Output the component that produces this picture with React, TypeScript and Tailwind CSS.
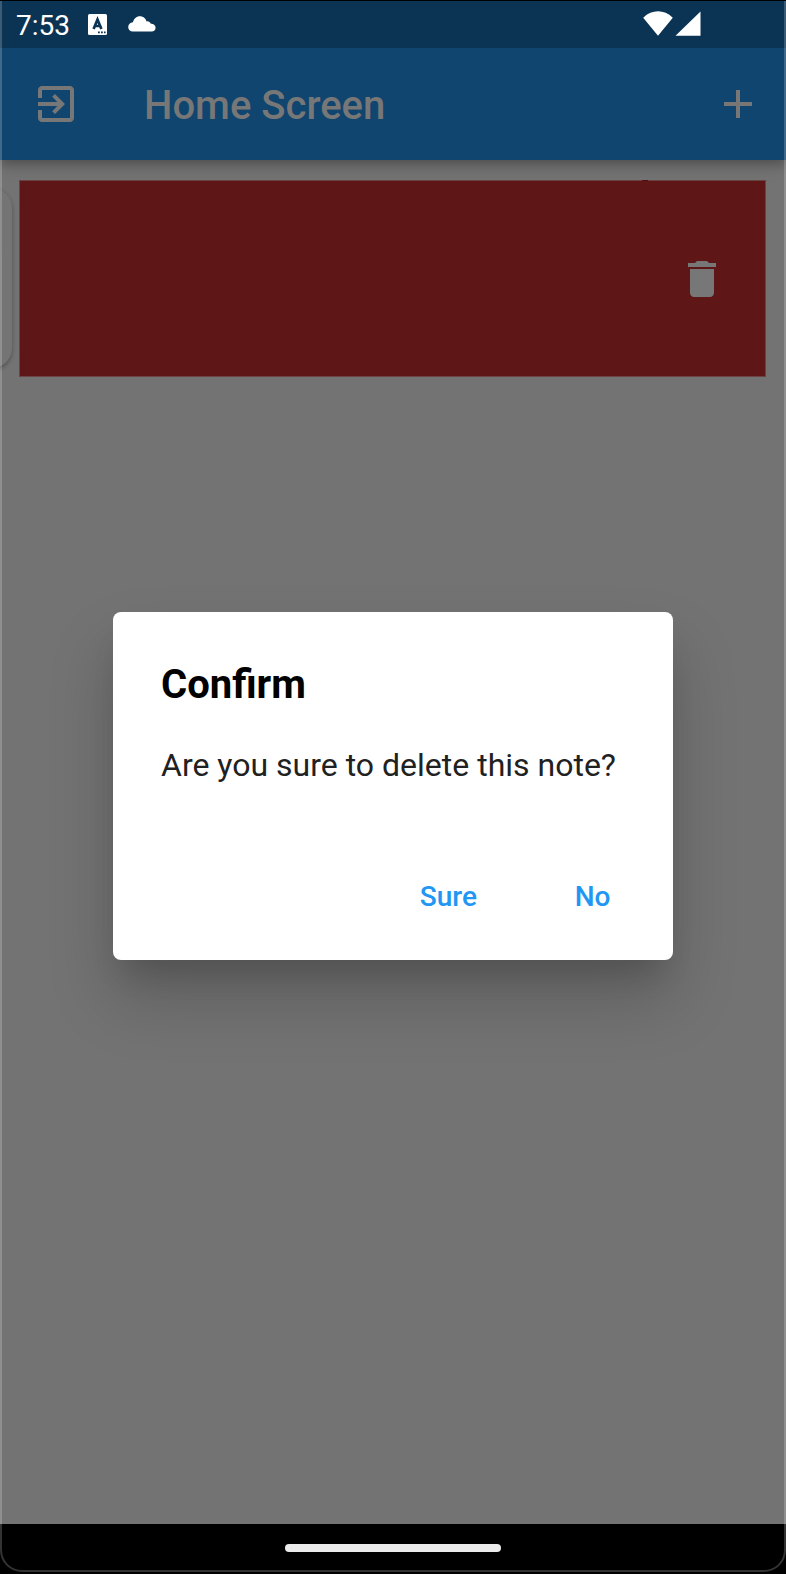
import React from 'react';

function StatusBar() {
  return (
    <div className="relative z-20 flex h-12 items-center border-t border-black bg-[#0b3454] pl-4 pr-[85.5px] text-white">
      <time className="w-[71.5px] pt-[2px] text-[28px] leading-[32px]">7:53</time>
      <svg className="mb-px h-[21px] w-[19px]" viewBox="0 0 19 21">
        <rect width="19" height="21" rx="1.5" fill="#fff" />
        <path d="M5.6 15 9.500 5.500l3.900 9.500M6.800 12h5.500" fill="none" stroke="#0b3454" strokeWidth="2.7" />
        <path d="M10 17.500h1.800v1.700H10zM13 17.500h1.800v1.700H13zM16 17.500h1.600v1.700H16z" fill="#0b3454" />
      </svg>
      <svg className="mb-[2px] ml-[21px] h-[16px] w-[28px]" viewBox="0 0 28 16">
        <path d="M5 15.500C2 15.500.2 13.400.2 11c0-2.600 2-4.600 4.700-4.800C6 2.600 8.300.2 11.800.2c3.400 0 6 2.200 6.700 5.200 1.200-.5 3.300 0 4.100 2.200 3 .2 5 2 5 4.200 0 2.200-1.600 3.700-4 3.700Z" fill="#fff" />
      </svg>
      <svg className="mb-[2px] ml-auto h-[25px] w-[58px]" viewBox="0 0 58 25">
        <path d="M.2 6.700C9 -1.800 21 -1.800 29.800 6.700L15 24.800ZM57.500.5V24.800H32.500Z" fill="#fff" />
      </svg>
    </div>
  );
}

function AppBar() {
  return (
    <header className="relative z-10 flex h-28 items-center bg-[#10456f] pl-[32px] pr-[24px] text-[#777] shadow-[0_4px_10px_rgba(0,0,0,0.25),0_8px_16px_rgba(0,0,0,0.08)]">
      <svg className="h-12 w-12" viewBox="0 0 24 24" fill="currentColor">
        <path d="M10.090 15.590 11.500 17l5-5-5-5-1.410 1.410L12.670 11H3v2h9.670l-2.580 2.590zM19 3H5c-1.110 0-2 .9-2 2v4h2V5h14v14H5v-4H3v4c0 1.100.89 2 2 2h14c1.100 0 2-.9 2-2V5c0-1.100-.9-2-2-2z" />
      </svg>
      <h1 className="ml-[64px] pt-[4px] text-[40px] font-medium leading-[46px]">Home Screen</h1>
      <svg className="ml-auto h-12 w-12" viewBox="0 0 24 24" fill="currentColor">
        <path d="M19 13h-6v6h-2v-6H5v-2h6V5h2v6h6v2z" />
      </svg>
    </header>
  );
}

function DismissibleNote() {
  return (
    <section className="flex pt-5">
      <div className="-ml-10 mt-[8px] h-[180px] w-[52px] rounded-[20px] bg-[#747474] shadow-[0_2px_4px_rgba(0,0,0,0.3)]" />
      <div className="relative ml-[7px] flex h-[197px] w-[747px] items-center justify-end border border-[#6c4444] bg-[#5f1616] pr-[39px]">
        <i className="absolute -top-px left-[622px] h-px w-[6px] bg-[#541010]" />
        <svg className="h-12 w-12 text-[#777]" viewBox="0 0 24 24" fill="currentColor">
          <path d="M6 19c0 1.100.9 2 2 2h8c1.100 0 2-.9 2-2V7H6v12zM19 4h-3.500l-1-1h-5l-1 1H5v2h14V4z" />
        </svg>
      </div>
    </section>
  );
}

function ConfirmDialog() {
  return (
    <div className="absolute inset-0 z-20 flex items-start justify-center pt-[611.500px]">
      <div role="dialog" className="h-[348.500px] w-[560px] rounded-[8px] bg-white px-12 pt-[50.500px] shadow-[0_22px_30px_-12px_rgba(0,0,0,0.16),0_38px_64px_2px_rgba(0,0,0,0.18)]">
        <h2 className="text-[40px] font-bold leading-[46px] text-black">Confirm</h2>
        <p className="mt-[33px] whitespace-nowrap text-[32px] leading-[48px] text-[#212121]">Are you sure to delete this note?</p>
        <div className="mt-[90px] flex justify-end pr-[14.5px] text-[28px] font-medium leading-[36px] text-[#2196f3]">
          <button className="w-[155px] text-left">Sure</button>
          <button>No</button>
        </div>
      </div>
    </div>
  );
}

export default function App() {
  return (
    <main className="relative flex h-[1574px] w-[786px] flex-col overflow-hidden bg-[#737373] font-['Roboto',sans-serif]">
      <StatusBar />
      <AppBar />
      <DismissibleNote />
      <footer className="mt-auto flex h-[50px] items-start justify-center bg-black pt-[20px]">
        <div className="h-[8px] w-[216px] rounded-full bg-[#ebebeb]" />
      </footer>
      <ConfirmDialog />
      <div className="pointer-events-none absolute inset-x-0 bottom-[2px] top-px z-30 rounded-b-[22px] border-x-2 border-b-2 border-white/20" />
    </main>
  );
}
